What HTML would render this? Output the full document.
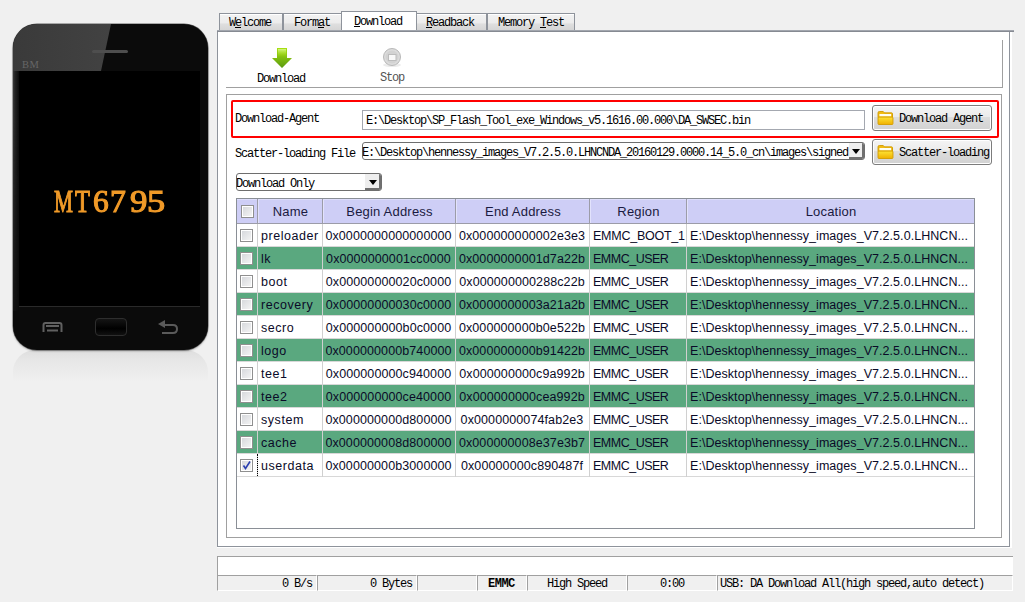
<!DOCTYPE html>
<html><head><meta charset="utf-8">
<style>
*{margin:0;padding:0;box-sizing:border-box}
html,body{width:1025px;height:602px;overflow:hidden;background:#f0f0f0;position:relative}
.a{position:absolute}
.m{font-family:"Liberation Mono",monospace;font-size:12px;letter-spacing:-1.2px;color:#000;white-space:pre;line-height:12px}
.s{font-family:"Liberation Sans",sans-serif;font-size:12.5px;white-space:pre;line-height:14px}
/* phone */
#phone{left:13px;top:24px;width:195px;height:326px;border-radius:24px;background:#0b0b0b;overflow:hidden;box-shadow:0 0 0 0.5px #666,0 1px 2px rgba(0,0,0,.4);z-index:1}
#gloss{left:0;top:0;width:195px;height:47px;background:linear-gradient(90deg,#3a3a3a,#4a4a4a);clip-path:polygon(0 0,98px 0,88px 47px,0 47px)}
#screen{left:6px;top:47px;width:181px;height:235px;background:#000}
/* tabs */
.tab{top:13px;height:18px;border:1px solid #8e939b;border-bottom:none;background:linear-gradient(#fff 0,#fff 1px,#f2f2f2 1px,#ececec 50%,#dedede 60%,#d4d4d4 100%)}
.tab.sel{top:11px;height:21px;background:#fff;z-index:2}
.tab span{position:absolute;top:3px}
u{text-decoration:none;position:relative}
u::after{content:"";position:absolute;left:0px;width:6px;bottom:2px;height:1px;background:#000}
#panel{left:217px;top:30px;width:793px;height:517px;border:1px solid #8e939b;background:#fff}
.btn{border:1px solid #7c7c7c;border-radius:3px;background:linear-gradient(#f4f4f4 0,#ebebeb 45%,#dddddd 46%,#d2d2d2 100%);box-shadow:inset 0 0 0 1px #fff}
.mt{top:162px;font-family:'Liberation Serif',serif;font-size:30.5px;line-height:32px;color:#f09a28;-webkit-text-stroke:1.1px #f09a28;transform-origin:0 0}
.folder{width:17px;height:14px}
.cb{width:13px;height:13px;border:1px solid #8f8f8f;background:linear-gradient(135deg,#d4d6da,#f6f6f6);box-shadow:inset 0 0 0 1px #fff}
.hd{color:#1a1a40}
.td{color:#0a0a28}
.seg{top:575px;height:16px;border-top:1px solid #a0a0a0;border-left:1px solid #a0a0a0;border-right:1px solid #fff;border-bottom:1px solid #fff;background:#f0f0f0}
.seg span{position:absolute;top:2px}
table{border-collapse:collapse;table-layout:fixed}
</style></head><body>

<!-- phone -->
<div id="phone" class="a">
  <div id="gloss" class="a"></div>
  <div class="a" style="left:79px;top:26px;width:36px;height:3px;border-radius:2px;background:#4e4e4e"></div>
  <div class="a" style="left:9px;top:36px;font-family:'Liberation Serif',serif;font-size:10.5px;letter-spacing:0.5px;color:#666;line-height:10px">BM</div>
  <div class="a" style="left:0;top:47px;width:6px;height:240px;background:linear-gradient(90deg,#3a3a3a,#242424 30%,rgba(11,11,11,0));-webkit-mask-image:linear-gradient(#000 20%,rgba(0,0,0,.5) 70%,rgba(0,0,0,.2))"></div>
  <div id="screen" class="a"></div>
  <div class="a" style="left:6px;top:282px;width:181px;height:1px;background:#2a2a2a"></div>
  <div class="a mt" style="left:40.8px;transform:scaleX(0.7)">M</div><div class="a mt" style="left:61.7px;transform:scaleX(0.8)">T</div><div class="a mt" style="left:79.5px;transform:scaleX(1.03)">6</div><div class="a mt" style="left:97.2px;transform:scaleX(1.04)">7</div><div class="a mt" style="left:116.6px;transform:scaleX(1.14)">9</div><div class="a mt" style="left:134.3px;transform:scaleX(1.19)">5</div>
  <!-- menu -->
  <svg class="a" style="left:29px;top:298px" width="21" height="11" viewBox="0 0 21 11"><path d="M1.5 10 V3 Q1.5 1 3.5 1 H17.5 Q19.5 1 19.5 3 V10" fill="none" stroke="#606060" stroke-width="2"/><path d="M4 4 H17 M5 8.5 H16" stroke="#606060" stroke-width="2"/></svg>
  <!-- home -->
  <div class="a" style="left:82px;top:294px;width:32px;height:18px;border:1px solid #2e2e2e;border-radius:4px;background:linear-gradient(#151515,#000 60%,#111)"></div>
  <!-- back -->
  <svg class="a" style="left:144px;top:296px" width="24" height="16" viewBox="0 0 24 16"><path d="M6 5 H16 Q20 5 20 9 Q20 13 16 13 H5" fill="none" stroke="#5a5a5a" stroke-width="2"/><path d="M1 4 L8 0 L8 8 Z" fill="#5a5a5a"/></svg>
</div>
<div class="a" style="left:13px;top:350px;width:195px;height:32px;background:linear-gradient(#dedede,#e6e6e6 30%,#f0f0f0);border-radius:22px 22px 0 0"></div>

<!-- panel -->
<div id="panel" class="a"></div>
<div class="a" style="left:1010px;top:31px;width:2px;height:517px;background:#fff"></div>
<div class="a" style="left:217px;top:547px;width:795px;height:1px;background:#fff"></div>

<!-- tabs -->
<div class="a tab" style="left:219px;width:64px"><span class="m" style="left:9px">W<u>e</u>lcome</span></div>
<div class="a tab" style="left:283px;width:59px"><span class="m" style="left:10px">Form<u>a</u>t</span></div>
<div class="a tab sel" style="left:341px;width:76px"><span class="m" style="left:12px;top:4px"><u>D</u>ownload</span></div>
<div class="a tab" style="left:416px;width:71px"><span class="m" style="left:9px"><u>R</u>eadback</span></div>
<div class="a tab" style="left:487px;width:88px"><span class="m" style="left:10px">Memory <u>T</u>est</span></div>
<div class="a" style="left:217px;top:30px;width:797px;height:2px;background:linear-gradient(#a2a6ae 50%,#868a92 50%);z-index:3"></div>

<!-- toolbar box -->
<div class="a" style="left:226px;top:40px;width:777px;height:48px;border-right:1px solid #a0a0a0;border-bottom:1px solid #a0a0a0"></div>
<svg class="a" style="left:272px;top:48px" width="21" height="21" viewBox="0 0 21 21">
  <defs><linearGradient id="g1" x1="0" y1="0" x2="0" y2="1"><stop offset="0" stop-color="#a8e010"/><stop offset="1" stop-color="#5a9a10"/></linearGradient></defs>
  <path d="M5 0 H15 V10 H20 L10 20 L0 10 H5 Z" fill="url(#g1)"/><defs><linearGradient id="g2" x1="0" y1="0" x2="0" y2="1"><stop offset="0" stop-color="#d8f890" stop-opacity=".9"/><stop offset="1" stop-color="#a8e010" stop-opacity="0"/></linearGradient></defs><rect x="6" y="1" width="8" height="8" fill="url(#g2)"/>
</svg>
<div class="a m" style="left:257px;top:73px">Download</div>
<svg class="a" style="left:382px;top:47px" width="20" height="22" viewBox="0 0 20 22">
  <ellipse cx="10" cy="18" rx="9" ry="2" fill="#ececec"/>
  <circle cx="10" cy="10" r="8.5" fill="#dcdcdc" stroke="#b8b8b8" stroke-width="1"/>
  <circle cx="10" cy="10" r="6.5" fill="#d2d2d2"/>
  <rect x="6.5" y="7.5" width="7.5" height="6" fill="#f8f8f8" stroke="#bcbcbc" stroke-width="1"/>
</svg>
<div class="a m" style="left:380px;top:72px;color:#555">Stop</div>

<!-- group box -->
<div class="a" style="left:226px;top:94px;width:776px;height:444px;border:1px solid #a0a0a0"></div>

<!-- red box -->
<div class="a" style="left:231px;top:100px;width:768px;height:38px;border:2px solid #ff0000;border-radius:2px"></div>
<div class="a m" style="left:235px;top:113px">Download-Agent</div>
<div class="a" style="left:362px;top:110px;width:503px;height:20px;border:1px solid #a4a8b0;background:#fff"></div>
<div class="a m" style="left:366px;top:115px">E:\Desktop\SP_Flash_Tool_exe_Windows_v5.1616.00.000\DA_SWSEC.bin</div>
<div class="a btn" style="left:872px;top:105px;width:120px;height:26px"></div>
<svg width="0" height="0" style="position:absolute"><defs><linearGradient id="fg" x1="0" y1="0" x2="0" y2="1"><stop offset="0" stop-color="#fde336"/><stop offset="1" stop-color="#f0b000"/></linearGradient></defs></svg><svg class="a folder" style="left:877px;top:111px" width="17" height="15" viewBox="0 0 17 15"><path d="M0.5 2 Q0.5 0.5 2 0.5 H6 L7.5 2 H15 Q16 2 16 3 V7 H0.5 Z" fill="#f2bc10" stroke="#cf9a00" stroke-width="1"/><rect x="2" y="3.2" width="12.5" height="2.6" fill="#fffef0"/><rect x="0.5" y="6.5" width="16" height="8" rx="1" fill="url(#fg)" stroke="#d49c00" stroke-width="1"/></svg>
<div class="a m" style="left:899px;top:113px">Download Agent</div>

<div class="a m" style="left:235px;top:148px">Scatter-loading File</div>
<div class="a" style="left:362px;top:142px;width:503px;height:18px;border:1px solid #6e6e6e;border-radius:3px;background:#fff"></div>
<div class="a m" style="left:362px;top:147px">E:\Desktop\hennessy_images_V7.2.5.0.LHNCNDA_20160129.0000.14_5.0_cn\images\signed</div>
<div class="a" style="left:849px;top:143px;width:15px;height:16px;background:#eee;border-right:2px solid #707070;border-bottom:2px solid #707070;border-radius:0 2px 2px 0"></div>
<svg class="a" style="left:852px;top:149px" width="8" height="5" viewBox="0 0 8 5"><path d="M0 0 H8 L4 5 Z" fill="#000"/></svg>
<div class="a btn" style="left:872px;top:139px;width:120px;height:26px"></div>
<svg class="a folder" style="left:877px;top:145px" width="17" height="15" viewBox="0 0 17 15"><path d="M0.5 2 Q0.5 0.5 2 0.5 H6 L7.5 2 H15 Q16 2 16 3 V7 H0.5 Z" fill="#f2bc10" stroke="#cf9a00" stroke-width="1"/><rect x="2" y="3.2" width="12.5" height="2.6" fill="#fffef0"/><rect x="0.5" y="6.5" width="16" height="8" rx="1" fill="url(#fg)" stroke="#d49c00" stroke-width="1"/></svg>
<div class="a m" style="left:899px;top:147px">Scatter-loading</div>

<!-- dropdown -->
<div class="a" style="left:236px;top:173px;width:146px;height:18px;border:1px solid #6e6e6e;border-radius:3px;background:#fff"></div>
<div class="a m" style="left:236px;top:178px">Download Only</div>
<div class="a" style="left:365px;top:174px;width:16px;height:16px;background:#eee;border-right:2px solid #707070;border-bottom:2px solid #707070;border-radius:0 2px 2px 0"></div>
<svg class="a" style="left:369px;top:180px" width="8" height="5" viewBox="0 0 8 5"><path d="M0 0 H8 L4 5 Z" fill="#000"/></svg>

<!-- table -->
<div class="a" style="left:236px;top:198px;width:739px;height:331px;border:1px solid #8a8f96;background:#fff"></div>
<!--TBL-->
<div class="a" style="left:237px;top:199px;width:737px;height:25px;background:#cecef6;border-bottom:1px solid #9c9ca8"></div>
<div class="a" style="left:237px;top:199px;width:737px;height:1px;background:#dedefc"></div>
<div class="a" style="left:257px;top:199px;width:1px;height:24px;background:#9c9ca8"></div>
<div class="a" style="left:258px;top:200px;width:1px;height:23px;background:#e2e2fc"></div>
<div class="a" style="left:322px;top:199px;width:1px;height:24px;background:#9c9ca8"></div>
<div class="a" style="left:323px;top:200px;width:1px;height:23px;background:#e2e2fc"></div>
<div class="a" style="left:455px;top:199px;width:1px;height:24px;background:#9c9ca8"></div>
<div class="a" style="left:456px;top:200px;width:1px;height:23px;background:#e2e2fc"></div>
<div class="a" style="left:589px;top:199px;width:1px;height:24px;background:#9c9ca8"></div>
<div class="a" style="left:590px;top:200px;width:1px;height:23px;background:#e2e2fc"></div>
<div class="a" style="left:686px;top:199px;width:1px;height:24px;background:#9c9ca8"></div>
<div class="a" style="left:687px;top:200px;width:1px;height:23px;background:#e2e2fc"></div>
<div class="a s hd" style="left:258px;top:205px;width:65px;text-align:center;font-size:13px;letter-spacing:0.2px">Name</div>
<div class="a s hd" style="left:323px;top:205px;width:133px;text-align:center;font-size:13px;letter-spacing:0.2px">Begin Address</div>
<div class="a s hd" style="left:456px;top:205px;width:134px;text-align:center;font-size:13px;letter-spacing:0.2px">End Address</div>
<div class="a s hd" style="left:590px;top:205px;width:97px;text-align:center;font-size:13px;letter-spacing:0.2px">Region</div>
<div class="a s hd" style="left:687px;top:205px;width:288px;text-align:center;font-size:13px;letter-spacing:0.2px">Location</div>
<div class="a cb" style="left:241px;top:205px"></div>
<div class="a" style="left:237px;top:224px;width:737px;height:23px;background:#ffffff;border-bottom:1px solid #d8d8d8"></div>
<div class="a" style="left:257px;top:224px;width:1px;height:23px;background:#d0d0d0"></div>
<div class="a" style="left:322px;top:224px;width:1px;height:23px;background:#d0d0d0"></div>
<div class="a" style="left:455px;top:224px;width:1px;height:23px;background:#d0d0d0"></div>
<div class="a" style="left:589px;top:224px;width:1px;height:23px;background:#d0d0d0"></div>
<div class="a" style="left:686px;top:224px;width:1px;height:23px;background:#d0d0d0"></div>
<div class="a cb" style="left:240px;top:229px"></div>
<div class="a s td" style="left:261px;top:229px;letter-spacing:0.55px">preloader</div>
<div class="a s td" style="left:322px;top:229px;width:133px;text-align:center;letter-spacing:0.1px">0x0000000000000000</div>
<div class="a s td" style="left:455px;top:229px;width:134px;text-align:center;letter-spacing:0.1px">0x000000000002e3e3</div>
<div class="a s td" style="left:593px;top:229px;letter-spacing:-0.25px">EMMC_BOOT_1</div>
<div class="a s td" style="left:690px;top:229px;letter-spacing:0.05px">E:\Desktop\hennessy_images_V7.2.5.0.LHNCN...</div>
<div class="a" style="left:237px;top:247px;width:737px;height:23px;background:#5aa87f;border-bottom:1px solid #d8d8d8"></div>
<div class="a" style="left:257px;top:247px;width:1px;height:23px;background:#d0d0d0"></div>
<div class="a" style="left:322px;top:247px;width:1px;height:23px;background:#d0d0d0"></div>
<div class="a" style="left:455px;top:247px;width:1px;height:23px;background:#d0d0d0"></div>
<div class="a" style="left:589px;top:247px;width:1px;height:23px;background:#d0d0d0"></div>
<div class="a" style="left:686px;top:247px;width:1px;height:23px;background:#d0d0d0"></div>
<div class="a cb" style="left:240px;top:252px"></div>
<div class="a s td" style="left:261px;top:252px;letter-spacing:0.55px">lk</div>
<div class="a s td" style="left:322px;top:252px;width:133px;text-align:center;letter-spacing:0.1px">0x0000000001cc0000</div>
<div class="a s td" style="left:455px;top:252px;width:134px;text-align:center;letter-spacing:0.1px">0x0000000001d7a22b</div>
<div class="a s td" style="left:593px;top:252px;letter-spacing:-0.5px">EMMC_USER</div>
<div class="a s td" style="left:690px;top:252px;letter-spacing:0.05px">E:\Desktop\hennessy_images_V7.2.5.0.LHNCN...</div>
<div class="a" style="left:237px;top:270px;width:737px;height:23px;background:#ffffff;border-bottom:1px solid #d8d8d8"></div>
<div class="a" style="left:257px;top:270px;width:1px;height:23px;background:#d0d0d0"></div>
<div class="a" style="left:322px;top:270px;width:1px;height:23px;background:#d0d0d0"></div>
<div class="a" style="left:455px;top:270px;width:1px;height:23px;background:#d0d0d0"></div>
<div class="a" style="left:589px;top:270px;width:1px;height:23px;background:#d0d0d0"></div>
<div class="a" style="left:686px;top:270px;width:1px;height:23px;background:#d0d0d0"></div>
<div class="a cb" style="left:240px;top:275px"></div>
<div class="a s td" style="left:261px;top:275px;letter-spacing:0.55px">boot</div>
<div class="a s td" style="left:322px;top:275px;width:133px;text-align:center;letter-spacing:0.1px">0x00000000020c0000</div>
<div class="a s td" style="left:455px;top:275px;width:134px;text-align:center;letter-spacing:0.1px">0x000000000288c22b</div>
<div class="a s td" style="left:593px;top:275px;letter-spacing:-0.5px">EMMC_USER</div>
<div class="a s td" style="left:690px;top:275px;letter-spacing:0.05px">E:\Desktop\hennessy_images_V7.2.5.0.LHNCN...</div>
<div class="a" style="left:237px;top:293px;width:737px;height:23px;background:#5aa87f;border-bottom:1px solid #d8d8d8"></div>
<div class="a" style="left:257px;top:293px;width:1px;height:23px;background:#d0d0d0"></div>
<div class="a" style="left:322px;top:293px;width:1px;height:23px;background:#d0d0d0"></div>
<div class="a" style="left:455px;top:293px;width:1px;height:23px;background:#d0d0d0"></div>
<div class="a" style="left:589px;top:293px;width:1px;height:23px;background:#d0d0d0"></div>
<div class="a" style="left:686px;top:293px;width:1px;height:23px;background:#d0d0d0"></div>
<div class="a cb" style="left:240px;top:298px"></div>
<div class="a s td" style="left:261px;top:298px;letter-spacing:0.55px">recovery</div>
<div class="a s td" style="left:322px;top:298px;width:133px;text-align:center;letter-spacing:0.1px">0x00000000030c0000</div>
<div class="a s td" style="left:455px;top:298px;width:134px;text-align:center;letter-spacing:0.1px">0x0000000003a21a2b</div>
<div class="a s td" style="left:593px;top:298px;letter-spacing:-0.5px">EMMC_USER</div>
<div class="a s td" style="left:690px;top:298px;letter-spacing:0.05px">E:\Desktop\hennessy_images_V7.2.5.0.LHNCN...</div>
<div class="a" style="left:237px;top:316px;width:737px;height:23px;background:#ffffff;border-bottom:1px solid #d8d8d8"></div>
<div class="a" style="left:257px;top:316px;width:1px;height:23px;background:#d0d0d0"></div>
<div class="a" style="left:322px;top:316px;width:1px;height:23px;background:#d0d0d0"></div>
<div class="a" style="left:455px;top:316px;width:1px;height:23px;background:#d0d0d0"></div>
<div class="a" style="left:589px;top:316px;width:1px;height:23px;background:#d0d0d0"></div>
<div class="a" style="left:686px;top:316px;width:1px;height:23px;background:#d0d0d0"></div>
<div class="a cb" style="left:240px;top:321px"></div>
<div class="a s td" style="left:261px;top:321px;letter-spacing:0.55px">secro</div>
<div class="a s td" style="left:322px;top:321px;width:133px;text-align:center;letter-spacing:0.1px">0x000000000b0c0000</div>
<div class="a s td" style="left:455px;top:321px;width:134px;text-align:center;letter-spacing:0.1px">0x000000000b0e522b</div>
<div class="a s td" style="left:593px;top:321px;letter-spacing:-0.5px">EMMC_USER</div>
<div class="a s td" style="left:690px;top:321px;letter-spacing:0.05px">E:\Desktop\hennessy_images_V7.2.5.0.LHNCN...</div>
<div class="a" style="left:237px;top:339px;width:737px;height:23px;background:#5aa87f;border-bottom:1px solid #d8d8d8"></div>
<div class="a" style="left:257px;top:339px;width:1px;height:23px;background:#d0d0d0"></div>
<div class="a" style="left:322px;top:339px;width:1px;height:23px;background:#d0d0d0"></div>
<div class="a" style="left:455px;top:339px;width:1px;height:23px;background:#d0d0d0"></div>
<div class="a" style="left:589px;top:339px;width:1px;height:23px;background:#d0d0d0"></div>
<div class="a" style="left:686px;top:339px;width:1px;height:23px;background:#d0d0d0"></div>
<div class="a cb" style="left:240px;top:344px"></div>
<div class="a s td" style="left:261px;top:344px;letter-spacing:0.55px">logo</div>
<div class="a s td" style="left:322px;top:344px;width:133px;text-align:center;letter-spacing:0.1px">0x000000000b740000</div>
<div class="a s td" style="left:455px;top:344px;width:134px;text-align:center;letter-spacing:0.1px">0x000000000b91422b</div>
<div class="a s td" style="left:593px;top:344px;letter-spacing:-0.5px">EMMC_USER</div>
<div class="a s td" style="left:690px;top:344px;letter-spacing:0.05px">E:\Desktop\hennessy_images_V7.2.5.0.LHNCN...</div>
<div class="a" style="left:237px;top:362px;width:737px;height:23px;background:#ffffff;border-bottom:1px solid #d8d8d8"></div>
<div class="a" style="left:257px;top:362px;width:1px;height:23px;background:#d0d0d0"></div>
<div class="a" style="left:322px;top:362px;width:1px;height:23px;background:#d0d0d0"></div>
<div class="a" style="left:455px;top:362px;width:1px;height:23px;background:#d0d0d0"></div>
<div class="a" style="left:589px;top:362px;width:1px;height:23px;background:#d0d0d0"></div>
<div class="a" style="left:686px;top:362px;width:1px;height:23px;background:#d0d0d0"></div>
<div class="a cb" style="left:240px;top:367px"></div>
<div class="a s td" style="left:261px;top:367px;letter-spacing:0.55px">tee1</div>
<div class="a s td" style="left:322px;top:367px;width:133px;text-align:center;letter-spacing:0.1px">0x000000000c940000</div>
<div class="a s td" style="left:455px;top:367px;width:134px;text-align:center;letter-spacing:0.1px">0x000000000c9a992b</div>
<div class="a s td" style="left:593px;top:367px;letter-spacing:-0.5px">EMMC_USER</div>
<div class="a s td" style="left:690px;top:367px;letter-spacing:0.05px">E:\Desktop\hennessy_images_V7.2.5.0.LHNCN...</div>
<div class="a" style="left:237px;top:385px;width:737px;height:23px;background:#5aa87f;border-bottom:1px solid #d8d8d8"></div>
<div class="a" style="left:257px;top:385px;width:1px;height:23px;background:#d0d0d0"></div>
<div class="a" style="left:322px;top:385px;width:1px;height:23px;background:#d0d0d0"></div>
<div class="a" style="left:455px;top:385px;width:1px;height:23px;background:#d0d0d0"></div>
<div class="a" style="left:589px;top:385px;width:1px;height:23px;background:#d0d0d0"></div>
<div class="a" style="left:686px;top:385px;width:1px;height:23px;background:#d0d0d0"></div>
<div class="a cb" style="left:240px;top:390px"></div>
<div class="a s td" style="left:261px;top:390px;letter-spacing:0.55px">tee2</div>
<div class="a s td" style="left:322px;top:390px;width:133px;text-align:center;letter-spacing:0.1px">0x000000000ce40000</div>
<div class="a s td" style="left:455px;top:390px;width:134px;text-align:center;letter-spacing:0.1px">0x000000000cea992b</div>
<div class="a s td" style="left:593px;top:390px;letter-spacing:-0.5px">EMMC_USER</div>
<div class="a s td" style="left:690px;top:390px;letter-spacing:0.05px">E:\Desktop\hennessy_images_V7.2.5.0.LHNCN...</div>
<div class="a" style="left:237px;top:408px;width:737px;height:23px;background:#ffffff;border-bottom:1px solid #d8d8d8"></div>
<div class="a" style="left:257px;top:408px;width:1px;height:23px;background:#d0d0d0"></div>
<div class="a" style="left:322px;top:408px;width:1px;height:23px;background:#d0d0d0"></div>
<div class="a" style="left:455px;top:408px;width:1px;height:23px;background:#d0d0d0"></div>
<div class="a" style="left:589px;top:408px;width:1px;height:23px;background:#d0d0d0"></div>
<div class="a" style="left:686px;top:408px;width:1px;height:23px;background:#d0d0d0"></div>
<div class="a cb" style="left:240px;top:413px"></div>
<div class="a s td" style="left:261px;top:413px;letter-spacing:0.55px">system</div>
<div class="a s td" style="left:322px;top:413px;width:133px;text-align:center;letter-spacing:0.1px">0x000000000d800000</div>
<div class="a s td" style="left:455px;top:413px;width:134px;text-align:center;letter-spacing:0.1px">0x0000000074fab2e3</div>
<div class="a s td" style="left:593px;top:413px;letter-spacing:-0.5px">EMMC_USER</div>
<div class="a s td" style="left:690px;top:413px;letter-spacing:0.05px">E:\Desktop\hennessy_images_V7.2.5.0.LHNCN...</div>
<div class="a" style="left:237px;top:431px;width:737px;height:23px;background:#5aa87f;border-bottom:1px solid #d8d8d8"></div>
<div class="a" style="left:257px;top:431px;width:1px;height:23px;background:#d0d0d0"></div>
<div class="a" style="left:322px;top:431px;width:1px;height:23px;background:#d0d0d0"></div>
<div class="a" style="left:455px;top:431px;width:1px;height:23px;background:#d0d0d0"></div>
<div class="a" style="left:589px;top:431px;width:1px;height:23px;background:#d0d0d0"></div>
<div class="a" style="left:686px;top:431px;width:1px;height:23px;background:#d0d0d0"></div>
<div class="a cb" style="left:240px;top:436px"></div>
<div class="a s td" style="left:261px;top:436px;letter-spacing:0.55px">cache</div>
<div class="a s td" style="left:322px;top:436px;width:133px;text-align:center;letter-spacing:0.1px">0x000000008d800000</div>
<div class="a s td" style="left:455px;top:436px;width:134px;text-align:center;letter-spacing:0.1px">0x000000008e37e3b7</div>
<div class="a s td" style="left:593px;top:436px;letter-spacing:-0.5px">EMMC_USER</div>
<div class="a s td" style="left:690px;top:436px;letter-spacing:0.05px">E:\Desktop\hennessy_images_V7.2.5.0.LHNCN...</div>
<div class="a" style="left:237px;top:454px;width:737px;height:23px;background:#ffffff;border-bottom:1px solid #d8d8d8"></div>
<div class="a" style="left:257px;top:454px;width:1px;height:23px;background:#d0d0d0"></div>
<div class="a" style="left:322px;top:454px;width:1px;height:23px;background:#d0d0d0"></div>
<div class="a" style="left:455px;top:454px;width:1px;height:23px;background:#d0d0d0"></div>
<div class="a" style="left:589px;top:454px;width:1px;height:23px;background:#d0d0d0"></div>
<div class="a" style="left:686px;top:454px;width:1px;height:23px;background:#d0d0d0"></div>
<div class="a cb" style="left:240px;top:459px"></div><svg class="a" style="left:242px;top:461px" width="9" height="9" viewBox="0 0 9 9"><path d="M1.5 4.5 L3.5 7.5 L8 0.5" fill="none" stroke="#2a3fb0" stroke-width="1.6"/></svg>
<div class="a s td" style="left:261px;top:459px;letter-spacing:0.55px">userdata</div>
<div class="a s td" style="left:322px;top:459px;width:133px;text-align:center;letter-spacing:0.1px">0x00000000b3000000</div>
<div class="a s td" style="left:455px;top:459px;width:134px;text-align:center;letter-spacing:0.1px">0x00000000c890487f</div>
<div class="a s td" style="left:593px;top:459px;letter-spacing:-0.5px">EMMC_USER</div>
<div class="a s td" style="left:690px;top:459px;letter-spacing:0.05px">E:\Desktop\hennessy_images_V7.2.5.0.LHNCN...</div>
<div class="a" style="left:257px;top:454px;width:1px;height:22px;border-left:1px dotted #000"></div>
<!--/TBL-->

<!-- status -->
<div class="a" style="left:217px;top:556px;width:796px;height:20px;border-top:1px solid #a0a0a0;border-left:1px solid #a0a0a0;background:#fff"></div>
<div class="a seg" style="left:217px;width:100px"><span class="m" style="right:4px">0 B/s</span></div>
<div class="a seg" style="left:317px;width:100px"><span class="m" style="right:4px">0 Bytes</span></div>
<div class="a seg" style="left:417px;width:60px"></div>
<div class="a seg" style="left:477px;width:50px"><span class="m" style="left:10px;font-weight:bold;letter-spacing:-0.5px">EMMC</span></div>
<div class="a seg" style="left:527px;width:100px"><span class="m" style="left:19px">High Speed</span></div>
<div class="a seg" style="left:627px;width:90px"><span class="m" style="left:32px">0:00</span></div>
<div class="a seg" style="left:717px;width:296px"><span class="m" style="left:2px">USB: DA Download All(high speed,auto detect)</span></div>


</body></html>
